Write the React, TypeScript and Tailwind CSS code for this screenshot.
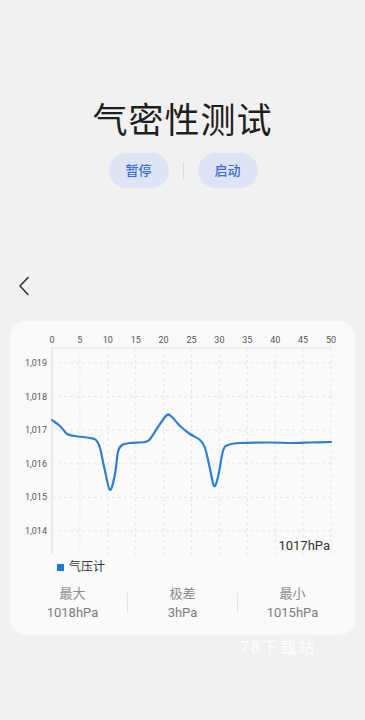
import React from 'react';

const FONT = { fontFamily: 'Roboto, "Noto Sans CJK SC", sans-serif' };

// chart geometry (svg coords, card-relative)
const X0 = 42;
const X1 = 321;
const TOP = 27;
const BOTTOM = 233;
const yOf = (v: number) => 42 + (1019 - v) * 33.6;
const xOf = (t: number) => X0 + t * ((X1 - X0) / 50);

const points: [number, number][] = [
  [42, 99], [50, 105], [57, 113], [65, 115], [80, 117], [86, 119],
  [90, 127], [95, 150], [100, 169], [105, 153], [108, 131], [112, 124],
  [120, 122], [135, 121], [140, 118], [148, 106], [157, 94], [162, 96],
  [170, 105], [180, 113], [190, 119], [195, 127], [200, 148], [204, 165],
  [208, 156], [213, 130], [218, 124], [230, 122], [260, 121.5], [280, 122],
  [300, 121.5], [321, 121],
];

// catmull-rom -> cubic bezier
const smoothPath = (pts: [number, number][]) => {
  let d = `M${pts[0][0]},${pts[0][1]}`;
  for (let i = 0; i < pts.length - 1; i++) {
    const p0 = pts[i - 1] || pts[i];
    const p1 = pts[i];
    const p2 = pts[i + 1];
    const p3 = pts[i + 2] || p2;
    const c1x = p1[0] + (p2[0] - p0[0]) / 6;
    const c1y = p1[1] + (p2[1] - p0[1]) / 6;
    const c2x = p2[0] - (p3[0] - p1[0]) / 6;
    const c2y = p2[1] - (p3[1] - p1[1]) / 6;
    d += ` C${c1x.toFixed(1)},${c1y.toFixed(1)} ${c2x.toFixed(1)},${c2y.toFixed(1)} ${p2[0]},${p2[1]}`;
  }
  return d;
};

const xTicks = [0, 5, 10, 15, 20, 25, 30, 35, 40, 45, 50];
const yTicks = [1019, 1018, 1017, 1016, 1015, 1014];

const Chart: React.FC = () => (
  <svg width="345" height="238" viewBox="0 0 345 238" className="block">
    {/* frame */}
    <line x1={X0} y1={TOP} x2={X1} y2={TOP} stroke="#e2e2e2" strokeWidth="1" />
    <line x1={X0} y1={TOP} x2={X0} y2={BOTTOM} stroke="#dcdcdc" strokeWidth="1" />
    {xTicks.slice(1).map((t) => (
      <line key={t} x1={xOf(t)} y1={TOP} x2={xOf(t)} y2={BOTTOM} stroke="#e6e6e6" strokeWidth="1" strokeDasharray="3 3" />
    ))}
    {yTicks.map((v) => (
      <line key={v} x1={X0} y1={yOf(v)} x2={X1} y2={yOf(v)} stroke="#e6e6e6" strokeWidth="1" strokeDasharray="3 3" />
    ))}
    {xTicks.map((t) => (
      <text key={t} x={xOf(t)} y="22" fontSize="9" fill="#555" textAnchor="middle" style={FONT}>
        {t}
      </text>
    ))}
    {yTicks.map((v) => (
      <text key={v} x="37" y={yOf(v) + 3} fontSize="9" fill="#555" textAnchor="end" style={FONT}>
        {v.toLocaleString('en-US')}
      </text>
    ))}
    <path d={smoothPath(points)} fill="none" stroke="#2f7fd0" strokeWidth="2.2" strokeLinejoin="round" strokeLinecap="round" />
    <text x="320" y="229" fontSize="13" fill="#333" textAnchor="end" style={FONT}>
      1017hPa
    </text>
  </svg>
);

const stats = [
  { label: '最大', value: '1018hPa' },
  { label: '极差', value: '3hPa' },
  { label: '最小', value: '1015hPa' },
];

export default function App() {
  return (
    <div className="relative min-h-[720px] w-full bg-[#f1f1f1] pt-[100px]" style={FONT}>
      <h1 className="text-center text-[35px] leading-[44px] font-normal text-[#1e1e1e] tracking-[1px]">
        气密性测试
      </h1>

      <div className="mt-[9px] flex items-center justify-center gap-[14px] pl-[1px]">
        <button className="h-[35px] w-[60px] rounded-full bg-[#dde4f4] text-[13px] font-medium text-[#3a6dd5]">
          暂停
        </button>
        <div className="h-[17px] w-px bg-[#dadada]" />
        <button className="h-[35px] w-[60px] rounded-full bg-[#dde4f4] text-[13px] font-medium text-[#3a6dd5]">
          启动
        </button>
      </div>

      <div className="mt-[88px] pl-[17px]">
        <svg width="14" height="20" viewBox="0 0 14 20" fill="none">
          <path d="M11 1.5 L3 10 L11 18.5" stroke="#333" strokeWidth="1.6" strokeLinecap="round" strokeLinejoin="round" />
        </svg>
      </div>

      <div className="mx-[10px] mt-[25px] flex h-[314px] w-[345px] flex-col rounded-[16px] bg-[#fafafa]">
        <Chart />
        <div className="mt-[1px] flex items-center gap-[5px] pl-[47px]">
          <span className="h-[7px] w-[7px] bg-[#1f77d4]" />
          <span className="text-[12px] leading-[14px] text-[#333]">气压计</span>
        </div>
        <div className="mt-[10px] flex items-center px-2">
          {stats.map((s, i) => (
            <React.Fragment key={s.label}>
              {i > 0 && <div className="h-[20px] w-px bg-[#e3e3e3]" />}
              <div className="flex flex-1 flex-col items-center">
                <span className="text-[13px] leading-[19px] text-[#8c8c8c]">{s.label}</span>
                <span className="text-[13px] leading-[19px] text-[#7c7c7c]">{s.value}</span>
              </div>
            </React.Fragment>
          ))}
        </div>
      </div>

      <span className="absolute left-[240px] top-[636px] text-[16px] tracking-[2px] text-white/90">78下载站</span>
    </div>
  );
}
